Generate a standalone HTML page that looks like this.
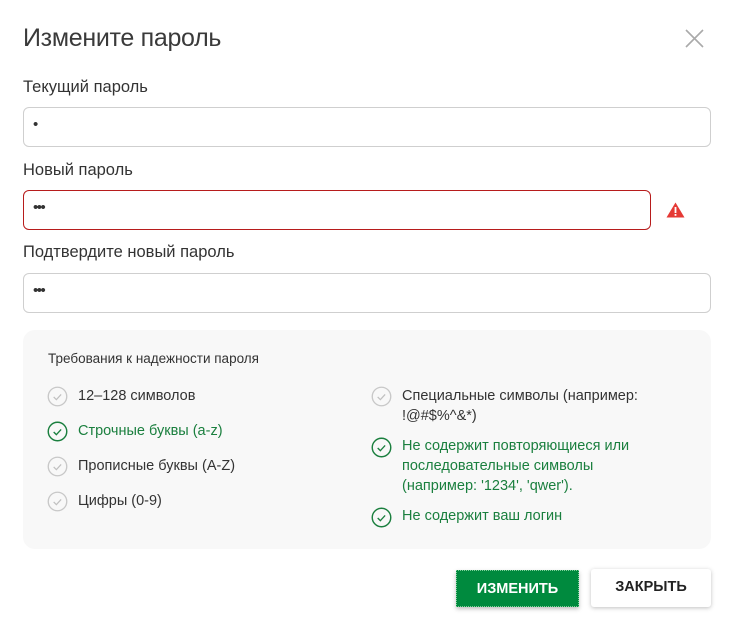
<!DOCTYPE html>
<html><head><meta charset="utf-8"><style>
*{box-sizing:border-box;margin:0;padding:0}
body{width:740px;height:630px;background:#fff;font-family:"Liberation Sans",sans-serif;color:#333;position:relative;overflow:hidden}
.a{position:absolute;white-space:nowrap}
.t{left:23px;top:24px;font-size:25px;color:#3a3a3a;letter-spacing:-0.3px}
.l{left:23px;font-size:16.5px;color:#333}
.in{position:absolute;left:23px;width:688px;height:40px;border:1px solid #cfcfcf;border-radius:6px;background:#fff}
.in span{position:absolute;left:9px;top:8px;font-size:15px;color:#333;letter-spacing:-1.5px}
.panel{position:absolute;left:23px;top:330px;width:688px;height:219px;background:#f8f8f8;border-radius:12px}
.r{font-size:14.5px;color:#333;line-height:20px}
.g{color:#1a7f3e}
.ic{position:absolute}
.btn{position:absolute;font-weight:bold;font-size:14.5px;text-align:center;line-height:36px}
</style></head><body>
<div class="a t">Измените пароль</div>
<svg class="a" style="left:685px;top:29px" width="19" height="19" viewBox="0 0 19 19"><path d="M1 1L18 18M18 1L1 18" stroke="#aaa" stroke-width="1.6"/></svg>

<div class="a l" style="top:78px">Текущий пароль</div>
<div class="in" style="top:107px"><span>•</span></div>
<div class="a l" style="top:161px">Новый пароль</div>
<div class="in" style="top:190px;width:628px;border-color:#b71c1c"><span>•••</span></div>
<svg class="a" style="left:666px;top:202px" width="19" height="16" viewBox="0 0 19 16"><path d="M9.5 0.5L18.5 15.5H0.5Z" fill="#e53935"/><rect x="8.6" y="5" width="1.8" height="6" fill="#fff"/><rect x="8.6" y="12" width="1.8" height="1.8" fill="#fff"/></svg>
<div class="a l" style="top:243px">Подтвердите новый пароль</div>
<div class="in" style="top:273px"><span>•••</span></div>

<div class="panel"></div>
<div class="a r" style="left:48px;top:349px;font-size:13.5px">Требования к надежности пароля</div>

<svg width="0" height="0" style="position:absolute"><defs>
<symbol id="cg" viewBox="0 0 22 22"><circle cx="11" cy="11" r="9.7" fill="none" stroke="#c8c8c8" stroke-width="1.4"/><path d="M7 11.5l2.8 2.8 5-5.5" fill="none" stroke="#c0c0c0" stroke-width="1.3"/></symbol>
<symbol id="cv" viewBox="0 0 22 22"><circle cx="11" cy="11" r="9.7" fill="none" stroke="#1a7f3e" stroke-width="1.5"/><path d="M7 11.5l2.8 2.8 5-5.5" fill="none" stroke="#1a7f3e" stroke-width="1.4"/></symbol>
</defs></svg>

<svg class="ic" style="left:47px;top:386px" width="21" height="21"><use href="#cg"/></svg>
<div class="a r" style="left:78px;top:386px">12–128 символов</div>
<svg class="ic" style="left:47px;top:421px" width="21" height="21"><use href="#cv"/></svg>
<div class="a r g" style="left:78px;top:421px">Строчные буквы (a-z)</div>
<svg class="ic" style="left:47px;top:456px" width="21" height="21"><use href="#cg"/></svg>
<div class="a r" style="left:78px;top:456px">Прописные буквы (A-Z)</div>
<svg class="ic" style="left:47px;top:491px" width="21" height="21"><use href="#cg"/></svg>
<div class="a r" style="left:78px;top:491px">Цифры (0-9)</div>

<svg class="ic" style="left:371px;top:386px" width="21" height="21"><use href="#cg"/></svg>
<div class="a r" style="left:402px;top:386px">Специальные символы (например:<br>!@#$%^&amp;*)</div>
<svg class="ic" style="left:371px;top:437px" width="21" height="21"><use href="#cv"/></svg>
<div class="a r g" style="left:402px;top:436px">Не содержит повторяющиеся или<br>последовательные символы<br>(например: '1234', 'qwer').</div>
<svg class="ic" style="left:371px;top:507px" width="21" height="21"><use href="#cv"/></svg>
<div class="a r g" style="left:402px;top:506px">Не содержит ваш логин</div>

<div class="btn" style="left:456px;top:570px;width:123px;height:37px;background:#008a3e;color:#fff;border:1px dotted #7fd09a;box-shadow:0 2px 4px rgba(0,0,0,.25)">ИЗМЕНИТЬ</div>
<div class="btn" style="left:591px;top:569px;width:120px;height:38px;background:#fff;color:#222;border-radius:3px;box-shadow:0 1px 4px rgba(0,0,0,.25)">ЗАКРЫТЬ</div>
</body></html>
